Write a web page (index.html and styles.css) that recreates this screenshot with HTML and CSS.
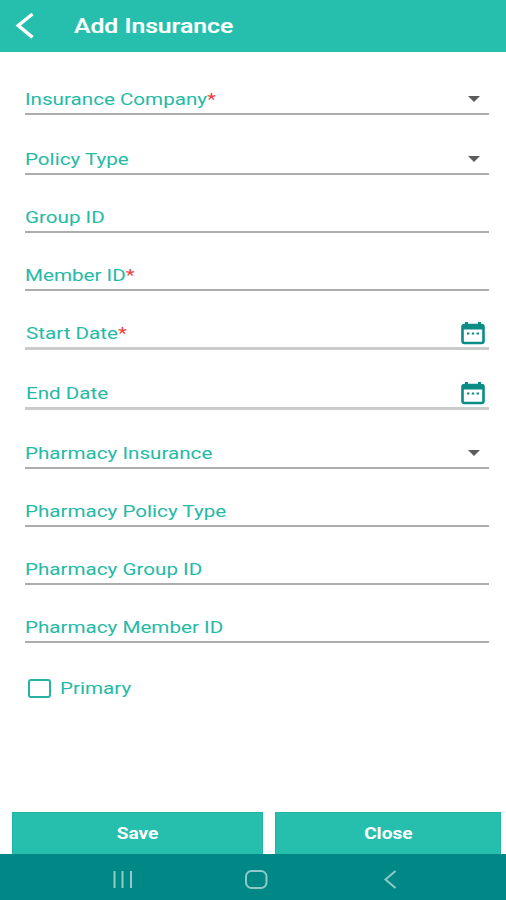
FILE: index.html
```html
<!DOCTYPE html>
<html lang="en">
<head>
<meta charset="utf-8">
<title>Add Insurance</title>
<link rel="stylesheet" href="styles.css">
</head>
<body>
<div class="screen">
  <header class="header">
    <svg class="back" width="22" height="30" viewBox="0 0 22 30"><path d="M19.500 3 5.300 14.500l14.200 11.800" fill="none" stroke="#fff" stroke-width="3.500"/></svg>
    <h1 class="title">Add Insurance</h1>
  </header>
  <main class="form">
    <div class="field first"><span class="label">Insurance Company<b>*</b></span><svg class="arrow" width="12" height="6" viewBox="0 0 12 6"><path d="M0 0h12L6 6z" fill="#5c5c5c"/></svg></div>
    <div class="field tall"><span class="label">Policy Type</span><svg class="arrow" width="12" height="6" viewBox="0 0 12 6"><path d="M0 0h12L6 6z" fill="#5c5c5c"/></svg></div>
    <div class="field"><span class="label">Group ID</span></div>
    <div class="field"><span class="label">Member ID<b>*</b></span></div>
    <div class="field date"><span class="label">Start Date<b>*</b></span><svg class="calendar" width="24" height="23" viewBox="0 0 24 23"><path d="M5.500 0v4M18.500 0v4" stroke="#0b8c87" stroke-width="3"/><rect x="1.500" y="3" width="21" height="18" rx="2" fill="#fff" stroke="#0b8c87" stroke-width="2.600"/><path d="M1 3h22v4.500H1z" fill="#0b8c87"/><path d="M6 11.500h2.400M10.800 11.500h2.400M15.600 11.500H18" stroke="#0b8c87" stroke-width="2.200"/></svg></div>
    <div class="field date tall"><span class="label">End Date</span><svg class="calendar" width="24" height="23" viewBox="0 0 24 23"><path d="M5.500 0v4M18.500 0v4" stroke="#0b8c87" stroke-width="3"/><rect x="1.500" y="3" width="21" height="18" rx="2" fill="#fff" stroke="#0b8c87" stroke-width="2.600"/><path d="M1 3h22v4.500H1z" fill="#0b8c87"/><path d="M6 11.500h2.400M10.800 11.500h2.400M15.600 11.500H18" stroke="#0b8c87" stroke-width="2.200"/></svg></div>
    <div class="field after-date"><span class="label">Pharmacy Insurance</span><svg class="arrow" width="12" height="6" viewBox="0 0 12 6"><path d="M0 0h12L6 6z" fill="#5c5c5c"/></svg></div>
    <div class="field"><span class="label">Pharmacy Policy Type</span></div>
    <div class="field"><span class="label">Pharmacy Group ID</span></div>
    <div class="field"><span class="label">Pharmacy Member ID</span></div>
    <div class="check"><span class="box"></span><span class="label">Primary</span></div>
  </main>
  <div class="actions">
    <button class="action"><span>Save</span></button>
    <button class="action"><span>Close</span></button>
  </div>
  <nav class="navbar">
    <svg width="506" height="46" viewBox="0 0 506 46" fill="none" stroke="#8fc9c9" stroke-width="2"><path d="M114.500 17v17M122.500 17v17M131 17v17"/><rect x="246" y="17" width="20.500" height="17" rx="5.500"/><path d="M395.500 17 385.500 25.500l10 8.500"/></svg>
  </nav>
</div>
</body>
</html>
```
FILE: styles.css
```css
* { box-sizing: border-box; }
body { margin: 0; background: #fff; font-family: Roboto, "Liberation Sans", sans-serif; }
.screen { width: 506px; height: 900px; display: flex; flex-direction: column; overflow: hidden; }
.header { height: 52px; flex: none; background: #26bfad; display: flex; align-items: center; padding-left: 13px; }
.back { flex: none; }
.title { margin: 0 0 0 38.5px; color: #fff; font-size: 21px; font-weight: 500; line-height: 26px; white-space: nowrap; transform: scaleX(1.177); transform-origin: left; -webkit-text-stroke: 0.2px #fff; }
.form { flex: 1; padding: 0 17px 0 25px; }
.field { height: 58px; display: flex; align-items: flex-end; justify-content: space-between; padding-bottom: 4px; border-bottom: 2px solid #adadad; }
.first { height: 63px; }
.tall { height: 60px; }
.after-date { height: 59px; }
.date { height: 59px; border-bottom: 3px solid #cbcbcb; padding: 0 0 4px 1px; }
.date.tall { height: 60px; }
.label { color: #24baa5; font-size: 17px; line-height: 20px; white-space: nowrap; transform: scaleX(1.212); transform-origin: left; }
.label b { color: #ee4040; font-weight: 400; }
.arrow { margin: 0 9px 7px 0; }
.calendar { margin: 0 4.5px -2px 0; }
.check { display: flex; align-items: center; gap: 9px; margin-top: 35px; padding-left: 3px; }
.box { width: 23px; height: 19px; border: 2px solid #27b3a4; border-radius: 3px; }
.actions { height: 42px; flex: none; display: grid; grid-template-columns: 251px 226px; gap: 12px; padding-left: 12px; }
.action { border: 1px solid #1fb3a4; border-bottom: 0; background: #26bfad; color: #fff; font: 700 16px/20px Roboto, sans-serif; padding: 1px 0 0; }
.action span { display: inline-block; transform: scaleX(1.19); }
.navbar { height: 46px; flex: none; background: #008886; }
.navbar svg { display: block; }
```
